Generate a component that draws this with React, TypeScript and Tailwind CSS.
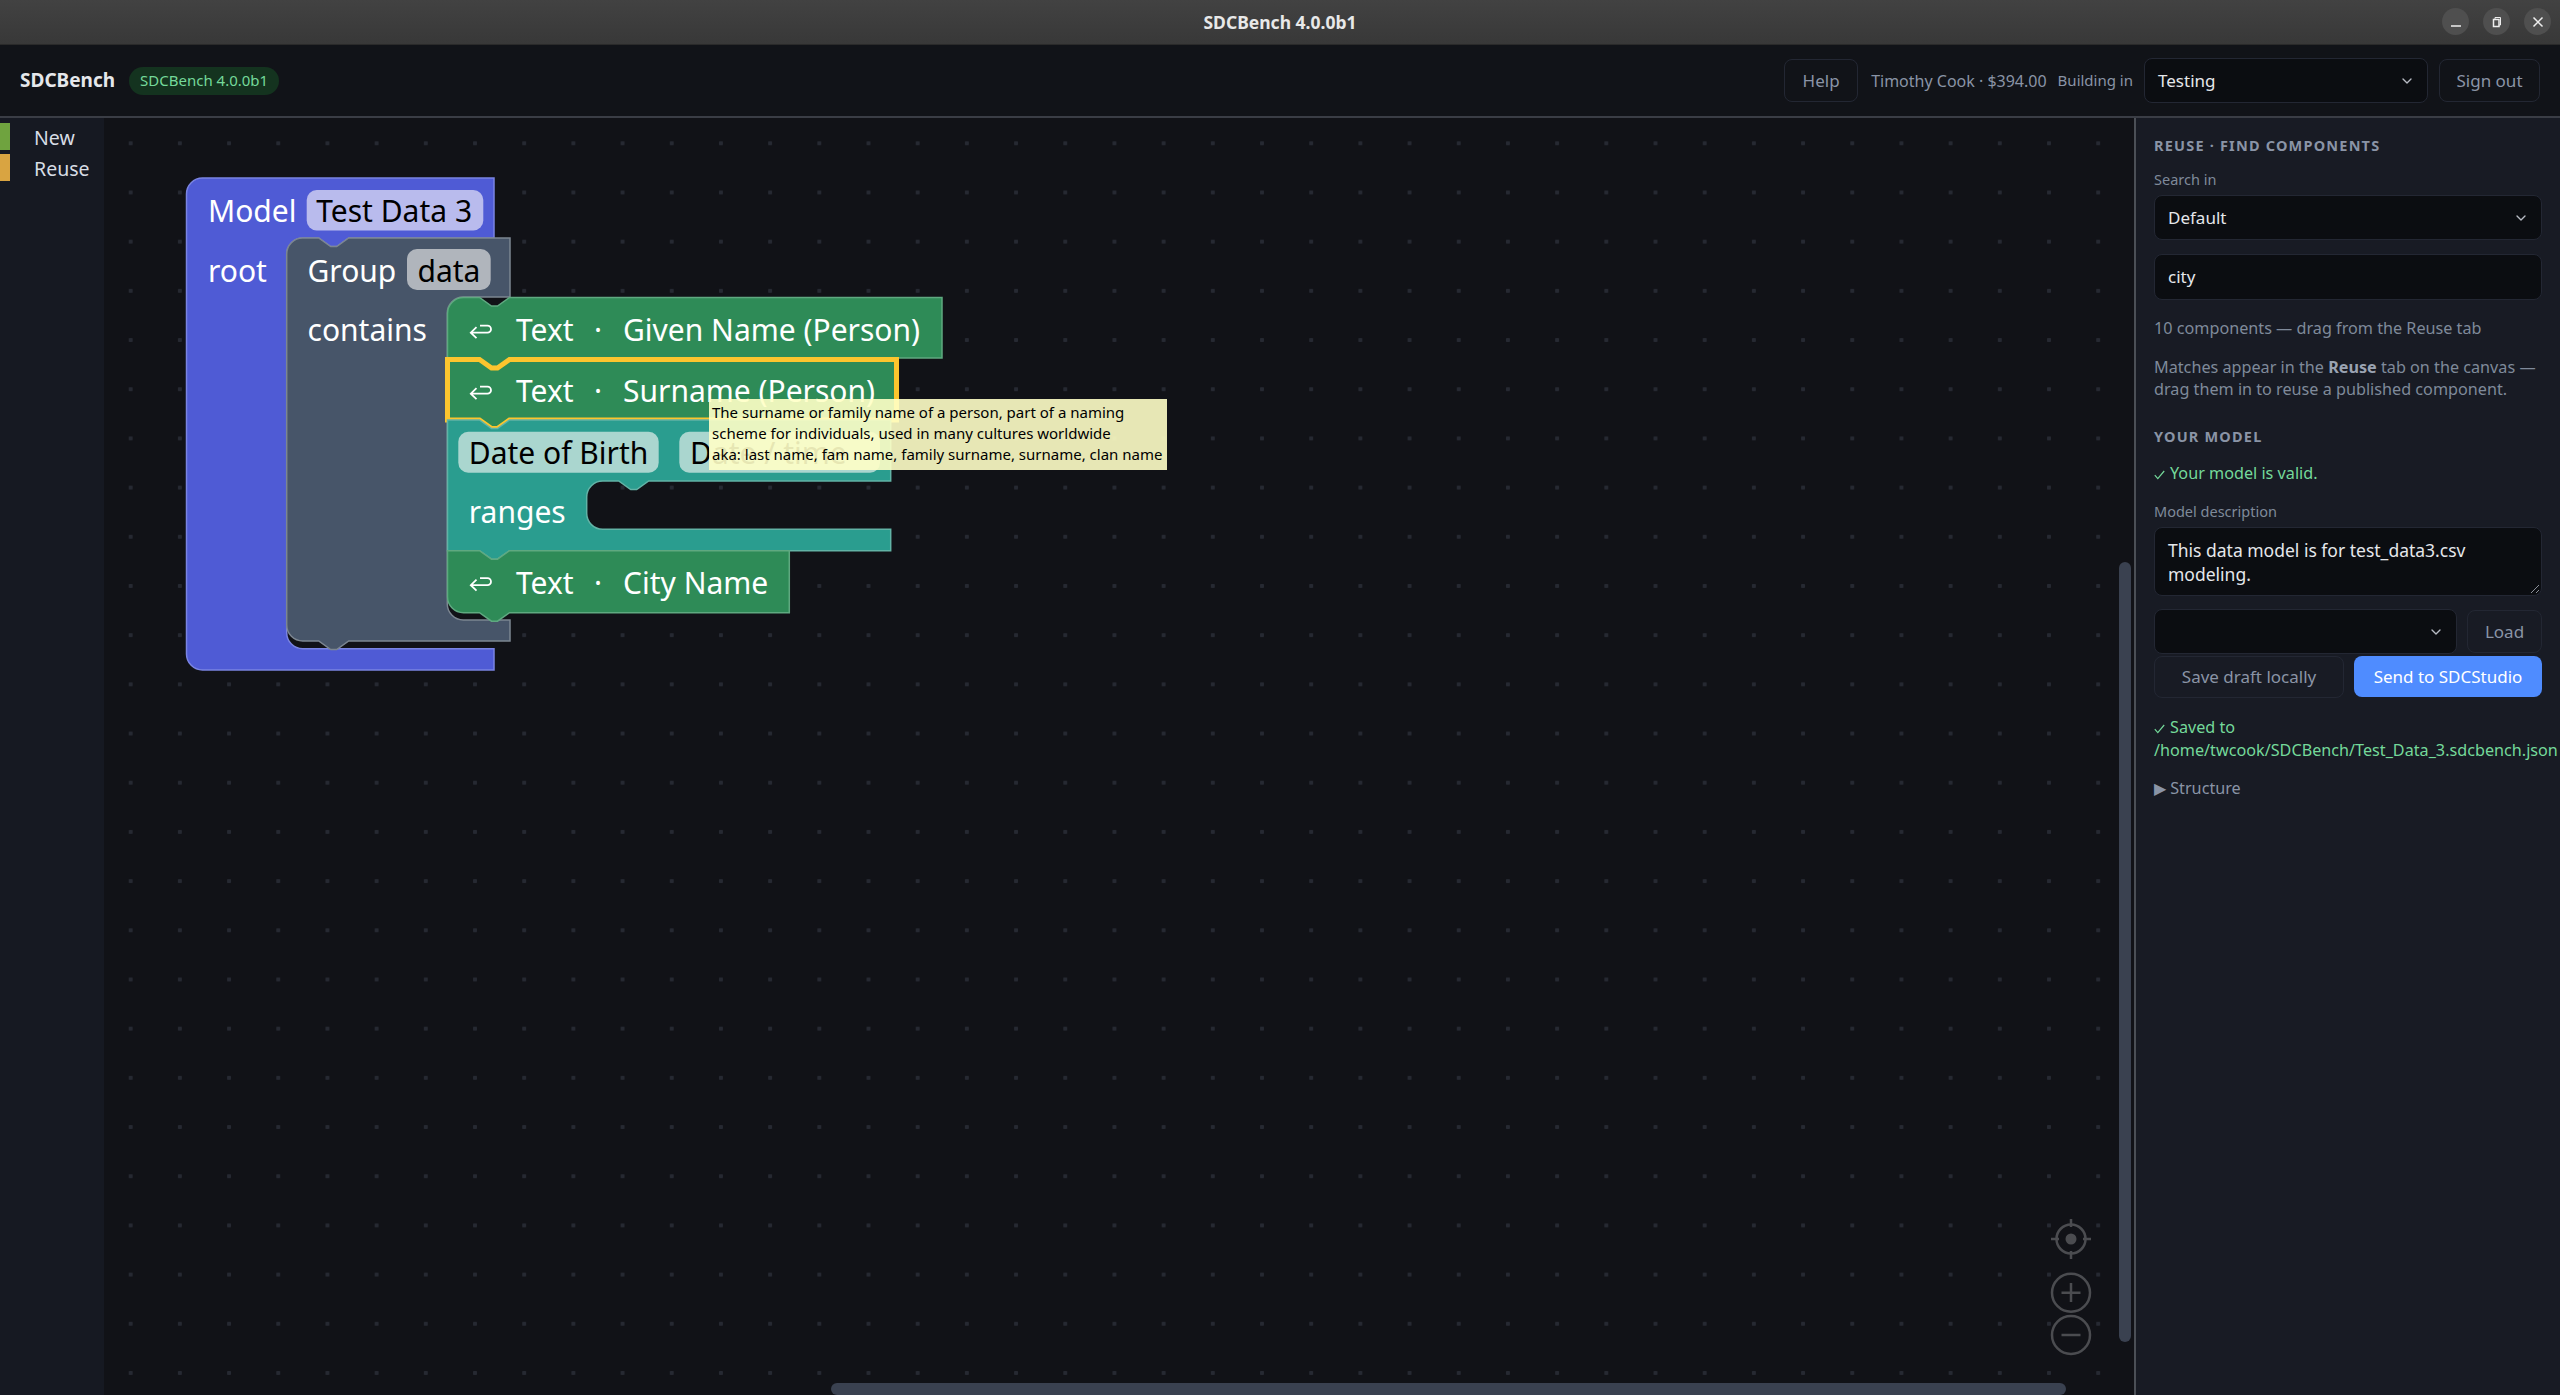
import { ChevronDown } from "lucide-react";

const sans = "font-['Noto_Sans','Liberation_Sans',sans-serif]";

// block outlines, in page coordinates
const modelPath =
  "M186.5 194a16 16 0 0 1 16-16H494V238H348.7l-12 8.5h-6l-12-8.5H302.7a16 16 0 0 0-16 16V632.7a16 16 0 0 0 16 16H494V670H202.5a16 16 0 0 1-16-16Z";
const groupPath =
  "M286.7 254a16 16 0 0 1 16-16h16l12 8.5h6l12-8.5H510V297H463.3a16 16 0 0 0-16 16V604a16 16 0 0 0 16 16H510V641H348.7l-12 8.5h-6l-12-8.5H302.7a16 16 0 0 1-16-16Z";
const textOnePath =
  "M447.5 313.5a16 16 0 0 1 16-16h16l12 8.5h6l12-8.5H942V358H509.5l-12 8.5h-6l-12-8.5H447.5Z";
const textTwoPath =
  "M447.5 359.5h32l12 8.5h6l12-8.5H896.5V420H509.5l-12 8.5h-6l-12-8.5H447.5Z";
const datePath =
  "M447.5 420h32l12 8.5h6l12-8.5H890.7V481H648.7l-12 8.5h-6l-12-8.5H602.7a16 16 0 0 0-16 16V513.3a16 16 0 0 0 16 16H890.7V550.7H509.5l-12 8.5h-6l-12-8.5H447.5Z";
const cityPath =
  "M447.5 550.7h32l12 8.5h6l12-8.5H789.3V612.7H509.5l-12 8.5h-6l-12-8.5H463.5a16 16 0 0 1-16-16Z";

function BlockText({ x, y, dark, children }: { x: number; y: number; dark?: boolean; children: string }) {
  return (
    <text x={x} y={y} fill={dark ? "#000" : "#fff"} className="text-[30px]">
      {children}
    </text>
  );
}

function FieldRect({ x, y, w, h, fill }: { x: number; y: number; w: number; h: number; fill: string }) {
  return <rect x={x} y={y} width={w} height={h} rx="10" fill={fill} />;
}

function TextRow({ y, label }: { y: number; label: string }) {
  return (
    <>
      {/* return arrow, baseline relative */}
      <path
        d={`M472 ${y - 8.3}H487.5a3.5 3.5 0 0 0 0-7H480M476.5 ${y - 13.8}L470.8 ${y - 8.3}L476.5 ${y - 2.8}`}
        fill="none"
        stroke="#fff"
        strokeWidth="1.8"
      />
      <BlockText x={516} y={y}>Text</BlockText>
      <BlockText x={594} y={y}>·</BlockText>
      <BlockText x={623} y={y}>{label}</BlockText>
    </>
  );
}

function Blocks() {
  return (
    <svg
      className={`absolute left-0 top-0 ${sans}`}
      width="1100"
      height="620"
      viewBox="104 118 1100 620"
    >
      <path d={modelPath} fill="#4f5bd5" stroke="#7a84e2" strokeWidth="1.5" />
      <FieldRect x={306.7} y={190} w={176.6} h={40.5} fill="#b9bbed" />
      <BlockText x={208} y={221.5}>Model</BlockText>
      <BlockText x={316.2} y={221.5} dark>Test Data 3</BlockText>
      <BlockText x={208} y={281.5}>root</BlockText>

      <path d={groupPath} fill="#475569" stroke="#7c8691" strokeWidth="1.5" />
      <FieldRect x={407} y={249} w={83.7} h={41} fill="#b0b5bc" />
      <BlockText x={307.5} y={281.5}>Group</BlockText>
      <BlockText x={417.5} y={281.5} dark>data</BlockText>
      <BlockText x={307.5} y={341}>contains</BlockText>

      <path d={textOnePath} fill="#2e8b57" stroke="#5fa980" strokeWidth="1.5" />
      <TextRow y={341} label="Given Name (Person)" />

      <path d={textTwoPath} fill="#2e8b57" stroke="#fcc52e" strokeWidth="5" />
      <TextRow y={402} label="Surname (Person)" />

      <path d={datePath} fill="#2a9d8f" stroke="#62b3a6" strokeWidth="1.5" />
      <FieldRect x={458.3} y={431.7} w={200.4} h={41} fill="#aad6cf" />
      <FieldRect x={679.3} y={431.7} w={200.7} h={41} fill="#aad6cf" />
      <BlockText x={468.8} y={464} dark>Date of Birth</BlockText>
      <BlockText x={690} y={464} dark>Date / time</BlockText>
      <BlockText x={468.8} y={523}>ranges</BlockText>

      <path d={cityPath} fill="#2e8b57" stroke="#5fa980" strokeWidth="1.5" />
      <TextRow y={593.5} label="City Name" />
    </svg>
  );
}

function ZoomControls() {
  return (
    <svg className="absolute left-[1940px] top-[1090px]" width="60" height="170" viewBox="0 0 60 170">
      <g fill="none" stroke="#4b4c50" strokeWidth="2.5">
        <circle cx="27" cy="31" r="14.5" />
        <path d="M27 11v8M27 43v8M7 31h8M39 31h8" />
        <circle cx="27" cy="84.7" r="19" />
        <path d="M27 75v19M17.5 84.7h19" />
        <circle cx="27" cy="127" r="19" />
        <path d="M17.5 127h19" />
      </g>
      <circle cx="27" cy="31" r="5.5" fill="#4b4c50" />
    </svg>
  );
}

function CheckMark() {
  return (
    <svg className="mr-[5px] inline-block align-[-1px]" width="11" height="10" viewBox="0 0 11 10">
      <path d="M0.8 5.2L3.8 8.6L10.2 1" fill="none" stroke="#74d99a" strokeWidth="1.2" />
    </svg>
  );
}

function PanelSelect({ value, className }: { value: string; className: string }) {
  return (
    <div
      className={`flex h-[45px] items-center justify-between rounded-lg border border-[#232733] bg-[#0b0d11] pl-[13px] pr-[12px] text-[17px] text-[#e5e7eb] ${className}`}
    >
      <span>{value}</span>
      <ChevronDown size={16} className="text-[#b8bcc4]" />
    </div>
  );
}

function Heading({ children }: { children: string }) {
  return <div className="text-[14.5px] font-bold leading-[20px] tracking-[1.2px] text-[#8a94a6]">{children}</div>;
}

function Panel() {
  return (
    <aside className={`flex w-[426px] shrink-0 flex-col overflow-hidden border-l-2 border-[#4b4f56] bg-[#181b24] pl-[18px] pr-[18px] pt-[17px] ${sans}`}>
      <Heading>REUSE · FIND COMPONENTS</Heading>
      <label className="mt-[14px] text-[14.5px] leading-[20px] text-[#7f8a9a]">Search in</label>
      <PanelSelect value="Default" className="mt-[6px]" />
      <div className="mt-[14px] flex h-[46px] items-center rounded-lg border border-[#232733] bg-[#0b0d11] pl-[13px] text-[17px] text-[#e5e7eb]">
        city
      </div>
      <p className="mt-[17px] text-[16.2px] leading-[22px] text-[#7f8a9a]">10 components — drag from the Reuse tab</p>
      <p className="mt-[17px] text-[16.2px] leading-[22px] text-[#7f8a9a]">
        Matches appear in the <b className="text-[#9aa3b2]">Reuse</b> tab on the canvas — drag them in to reuse a published component.
      </p>
      <div className="mt-[26px]">
        <Heading>YOUR MODEL</Heading>
      </div>
      <p className="mt-[16px] text-[16.2px] leading-[22px] text-[#74d99a]">
        <CheckMark />
        Your model is valid.
      </p>
      <label className="mt-[17px] text-[14.5px] leading-[20px] text-[#7f8a9a]">Model description</label>
      <div className="relative mt-[6px] h-[69px] rounded-lg border border-[#232733] bg-[#0b0d11] pl-[13px] pr-[13px] pt-[11px] text-[17.5px] leading-[23.5px] text-[#e5e7eb]">
        This data model is for test_data3.csv modeling.
        <svg className="absolute bottom-[1px] right-[1px]" width="10" height="10" viewBox="0 0 10 10">
          <path d="M1 9l8-8M6 9l3-3" stroke="#8a8f98" strokeWidth="1" />
        </svg>
      </div>
      <div className="mt-[13px] flex items-center gap-[10px]">
        <PanelSelect value="" className="flex-1" />
        <button className="h-[43px] w-[75px] rounded-lg border border-[#232733] text-[17px] text-[#8a94a6]">Load</button>
      </div>
      <div className="mt-[2px] flex gap-[10px]">
        <button className="h-[42px] w-[190px] rounded-lg border border-[#232733] text-[17px] text-[#8a94a6]">
          Save draft locally
        </button>
        <button className="h-[41px] flex-1 rounded-lg bg-[#4f8cff] text-[17px] text-white">Send to SDCStudio</button>
      </div>
      <p className="mt-[18px] w-[420px] text-[16.2px] leading-[22.5px] text-[#74d99a]">
        <CheckMark />
        Saved to
        <br />
        /home/twcook/SDCBench/Test_Data_3.sdcbench.json
      </p>
      <p className="mt-[16px] text-[16.2px] leading-[22px] text-[#8a94a6]">▶ Structure</p>
    </aside>
  );
}

export default function App() {
  return (
    <div className={`flex h-screen w-full flex-col overflow-hidden bg-[#111318] ${sans}`}>
      {/* window title bar */}
      <div className="relative flex h-[45px] shrink-0 items-center justify-center border-b border-[#2a2a2a] bg-gradient-to-b from-[#424242] to-[#383838]">
        <span className="text-[17.5px] font-bold text-[#e8e8e8]">SDCBench 4.0.0b1</span>
        <div className="absolute right-[9px] top-[8px] flex gap-[14px]">
          <div className="flex h-[27px] w-[27px] items-center justify-center rounded-full bg-[#4f4f4f]">
            <svg width="12" height="12" viewBox="0 0 12 12"><path d="M1 10h10" stroke="#eee" strokeWidth="1.5" /></svg>
          </div>
          <div className="flex h-[27px] w-[27px] items-center justify-center rounded-full bg-[#4f4f4f]">
            <svg width="12" height="12" viewBox="0 0 12 12" fill="none" stroke="#eee">
              <path d="M4 3V1.5h5.5V9H8" />
              <rect x="2.5" y="3.5" width="5.5" height="7" strokeWidth="1.5" />
            </svg>
          </div>
          <div className="flex h-[27px] w-[27px] items-center justify-center rounded-full bg-[#4f4f4f]">
            <svg width="12" height="12" viewBox="0 0 12 12"><path d="M1.5 1.5l9 9M10.5 1.5l-9 9" stroke="#eee" strokeWidth="1.5" /></svg>
          </div>
        </div>
      </div>

      {/* app header */}
      <header className="flex h-[73px] shrink-0 items-center border-b-2 border-[#3a3d45] bg-[#111318] pl-[20px] pr-[20px]">
        <span className="text-[19px] font-bold text-[#e5e7eb]">SDCBench</span>
        <span className="ml-[14px] flex h-[28px] items-center rounded-full bg-[#14331f] px-[11px] text-[15px] text-[#74d99a]">
          SDCBench 4.0.0b1
        </span>
        <button className="ml-auto h-[43px] w-[74px] rounded-lg border border-[#232733] text-[17px] text-[#8a94a6]">Help</button>
        <span className="ml-[13px] text-[16px] text-[#8a94a6]">Timothy Cook · $394.00</span>
        <span className="ml-[11px] text-[15px] text-[#8a94a6]">Building in</span>
        <div className="ml-[11px] flex h-[45px] w-[284px] items-center justify-between rounded-lg border border-[#232733] bg-[#0b0d11] pl-[13px] pr-[12px] text-[17px] text-[#e5e7eb]">
          <span>Testing</span>
          <ChevronDown size={16} className="text-[#b8bcc4]" />
        </div>
        <button className="ml-[11px] h-[43px] w-[101px] rounded-lg border border-[#232733] text-[17px] text-[#8a94a6]">Sign out</button>
      </header>

      <main className="flex min-h-0 flex-1">
        {/* toolbox */}
        <nav className="flex w-[104px] shrink-0 flex-col gap-[4px] bg-[#161922] pt-[5px] text-[19.5px] text-[#d8dde5]">
          <div className="flex h-[27px] items-center">
            <div className="h-full w-[10px] bg-[#6fa33f]" />
            <span className="ml-[24px] mt-[3px]">New</span>
          </div>
          <div className="flex h-[27px] items-center">
            <div className="h-full w-[10px] bg-[#d9a441]" />
            <span className="ml-[24px] mt-[3px]">Reuse</span>
          </div>
        </nav>

        {/* workspace */}
        <section className="relative min-w-0 flex-1 bg-[#111217] bg-[radial-gradient(circle,#262932_2px,transparent_2.5px)] bg-[size:49.2px_49.2px] bg-[position:2.1px_0.7px]">
          <Blocks />

          <div className="absolute left-[605px] top-[281px] h-[71px] w-[458px] whitespace-nowrap bg-[#ffffc7]/90 pl-[3px] pt-[3px] text-[15px] leading-[21px] text-black">
            The surname or family name of a person, part of a naming
            <br />
            scheme for individuals, used in many cultures worldwide
            <br />
            aka: last name, fam name, family surname, surname, clan name
          </div>

          <ZoomControls />

          <div className="absolute left-[2015px] top-[444px] h-[780px] w-[12px] rounded-full bg-[#3a4150]" />
          <div className="absolute bottom-0 left-[727px] h-[12px] w-[1235px] rounded-full bg-[#3a4150]" />
        </section>

        <Panel />
      </main>
    </div>
  );
}
